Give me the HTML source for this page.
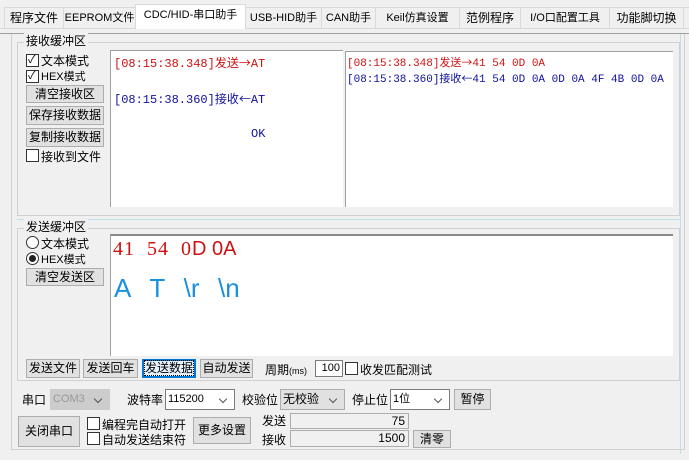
<!DOCTYPE html>
<html><head><meta charset="utf-8"><style>
*{box-sizing:border-box;margin:0;padding:0}
body{width:689px;height:460px;background:#f0f0f0;font-family:"Liberation Sans","Noto Sans CJK SC",sans-serif;font-size:12px;color:#000;position:relative;overflow:hidden}
.a{position:absolute;white-space:nowrap}
.tab{position:absolute;top:7px;height:21px;border:1px solid #d9d9d9;border-bottom:none;background:#f0f0f0;text-align:center;line-height:20px;font-size:12px}
.tab.act{background:#fff;top:4px;height:25px;border-color:#d9d9d9}
.btn{position:absolute;background:#e1e1e1;border:1px solid #adadad;text-align:center;font-size:12px}
.cb{position:absolute;width:13px;height:13px;border:1px solid #333;background:#fff}
.mono{font-family:"Liberation Mono","Noto Sans CJK SC",monospace;font-size:12px}
.ar{font-family:"Noto Sans CJK SC",sans-serif;font-size:12px}
.box{position:absolute;background:#fff}
.combo{position:absolute;background:#fff;border:1px solid #7a7a7a;height:21px;line-height:19px;padding-left:2px;font-size:12px}
.combo:after{content:"";position:absolute;right:8px;top:6px;width:5px;height:5px;border-right:1px solid #555;border-bottom:1px solid #555;transform:rotate(45deg)}
.field{position:absolute;background:#f0f0f0;border:1px solid #adadad;text-align:right;padding-right:3px;line-height:14px;font-size:12px}
</style></head><body>
<div class="a" style="left:0;top:28px;width:689px;height:432px;background:#f0f0f0;border-top:1px solid #d9d9d9"></div>
<div class="tab" style="left:4px;width:60px">程序文件</div>
<div class="tab" style="left:63px;width:73px;font-size:11px">EEPROM文件</div>
<div class="tab act" style="left:135px;width:111px;font-size:11px">CDC/HID-串口助手</div>
<div class="tab" style="left:245px;width:77px;font-size:11px">USB-HID助手</div>
<div class="tab" style="left:321px;width:55px;font-size:11px">CAN助手</div>
<div class="tab" style="left:375px;width:85px;font-size:11px">Keil仿真设置</div>
<div class="tab" style="left:459px;width:62px">范例程序</div>
<div class="tab" style="left:520px;width:90px;font-size:11px">I/O口配置工具</div>
<div class="tab" style="left:609px;width:75px">功能脚切换</div>
<div class="tab" style="left:683px;width:10px"></div>
<div class="a" style="left:0;top:33px;width:689px;height:1px;background:#a0a0a0"></div>
<div class="a" style="left:11px;top:34px;width:674px;height:416px;border:1px solid #d0d0d0;border-top:none"></div>
<div class="a" style="left:680px;top:34px;width:1px;height:420px;background:#c5dde8"></div>
<!-- receive group -->
<div class="a" style="left:17px;top:42px;width:663px;height:174px;border:1px solid #d0d0d0"></div>
<div class="a" style="left:17px;top:219px;width:663px;height:1px;background:#bfe0ec"></div>
<div class="a" style="left:24px;top:33px;background:#f0f0f0;padding:0 2px;line-height:16px">接收缓冲区</div>
<div class="cb" style="left:26px;top:54px"></div><div class="a" style="left:28px;top:51px;font-size:11px">✓</div><div class="a" style="left:41px;top:52px">文本模式</div>
<div class="cb" style="left:26px;top:70px"></div><div class="a" style="left:28px;top:67px;font-size:11px">✓</div><div class="a" style="left:41px;top:68px;font-size:11px">HEX模式</div>
<div class="btn" style="left:26px;top:85px;width:78px;height:18px;line-height:16px">清空接收区</div>
<div class="btn" style="left:26px;top:106px;width:78px;height:19px;line-height:17px">保存接收数据</div>
<div class="btn" style="left:26px;top:128px;width:78px;height:19px;line-height:17px">复制接收数据</div>
<div class="cb" style="left:26px;top:149px"></div><div class="a" style="left:41px;top:148px">接收到文件</div>
<div class="box" style="left:110px;top:50px;width:233px;height:157px;border-left:1px solid #a0a0a0;border-top:1px solid #a0a0a0"></div>
<div class="a mono" style="left:114px;top:54px;color:#d01010">[08:15:38.348]发送<span class="ar">→</span>AT</div>
<div class="a mono" style="left:114px;top:90px;color:#1010a0">[08:15:38.360]接收<span class="ar">←</span>AT</div>
<div class="a mono" style="left:251px;top:127px;color:#1010a0">OK</div>
<div class="box" style="left:345px;top:51px;width:328px;height:156px;border-left:1px solid #a0a0a0;border-top:1px solid #a0a0a0"></div>
<div class="a mono" style="left:347px;top:54px;color:#d01010;font-size:11px">[08:15:38.348]发送<span class="ar" style="font-size:11px">→</span>41 54 0D 0A</div>
<div class="a mono" style="left:347px;top:70px;color:#1010a0;font-size:11px">[08:15:38.360]接收<span class="ar" style="font-size:11px">←</span>41 54 0D 0A 0D 0A 4F 4B 0D 0A</div>
<!-- send group -->
<div class="a" style="left:17px;top:228px;width:663px;height:153px;border:1px solid #d0d0d0"></div>
<div class="a" style="left:24px;top:219px;background:#f0f0f0;padding:0 2px;line-height:16px">发送缓冲区</div>
<div class="cb" style="left:26px;top:236px;border-radius:50%"></div><div class="a" style="left:41px;top:235px">文本模式</div>
<div class="cb" style="left:26px;top:252px;border-radius:50%"></div><div class="a" style="left:29px;top:255px;width:7px;height:7px;border-radius:50%;background:#222"></div><div class="a" style="left:41px;top:251px;font-size:11px">HEX模式</div>
<div class="btn" style="left:26px;top:268px;width:78px;height:18px;line-height:16px">清空发送区</div>
<div class="box" style="left:110px;top:234px;width:563px;height:122px;border-top:2px solid #888;border-left:1px solid #a0a0a0"></div>
<div class="a" style="left:113px;top:238px;color:#d01010;font-size:20px;font-family:'Liberation Serif',serif;letter-spacing:1px">41&nbsp; 54&nbsp; 0<span style="font-family:'Liberation Sans',sans-serif;letter-spacing:0">D 0A</span></div>
<div class="a" style="left:114px;top:273px;color:#1a90e0;font-size:26px;word-spacing:2px">A&nbsp; T&nbsp; \r&nbsp; \n</div>
<div class="btn" style="left:26px;top:359px;width:54px;height:19px;line-height:17px">发送文件</div>
<div class="btn" style="left:83px;top:359px;width:55px;height:19px;line-height:17px">发送回车</div>
<div class="btn" style="left:142px;top:359px;width:54px;height:19px;line-height:15px;border:2px solid #0078d7;background:#e5f1fb"><span style="outline:1px dotted #000">发送数据</span></div>
<div class="btn" style="left:200px;top:359px;width:53px;height:19px;line-height:17px">自动发送</div>
<div class="a" style="left:265px;top:361px">周期<span style="font-size:9px">(ms)</span></div>
<div class="a" style="left:315px;top:360px;width:28px;height:17px;background:#fff;border:1px solid #7a7a7a;text-align:right;padding-right:2px;line-height:15px;font-size:11px">100</div>
<div class="cb" style="left:345px;top:362px"></div><div class="a" style="left:360px;top:361px">收发匹配测试</div>
<!-- bottom -->
<div class="a" style="left:22px;top:391px">串口</div>
<div class="combo" style="left:50px;top:389px;width:60px;background:#ccc;border-color:#ccc;color:#999;font-size:11px">COM3</div>
<div class="a" style="left:127px;top:391px">波特率</div>
<div class="combo" style="left:165px;top:389px;width:70px;font-size:11px">115200</div>
<div class="a" style="left:242px;top:391px">校验位</div>
<div class="combo" style="left:280px;top:389px;width:65px;background:#e1e1e1;border-color:#adadad">无校验</div>
<div class="a" style="left:352px;top:391px">停止位</div>
<div class="combo" style="left:390px;top:389px;width:60px;font-size:11px">1位</div>
<div class="btn" style="left:454px;top:389px;width:37px;height:21px;line-height:19px">暂停</div>
<div class="btn" style="left:18px;top:416px;width:62px;height:31px;line-height:29px">关闭串口</div>
<div class="cb" style="left:87px;top:417px"></div><div class="a" style="left:102px;top:416px">编程完自动打开</div>
<div class="cb" style="left:87px;top:432px"></div><div class="a" style="left:102px;top:431px">自动发送结束符</div>
<div class="btn" style="left:193px;top:417px;width:58px;height:27px;line-height:25px">更多设置</div>
<div class="a" style="left:262px;top:412px">发送</div>
<div class="a" style="left:262px;top:431px">接收</div>
<div class="field" style="left:290px;top:413px;width:119px;height:16px">75</div>
<div class="field" style="left:290px;top:430px;width:119px;height:17px">1500</div>
<div class="btn" style="left:413px;top:430px;width:38px;height:18px;line-height:16px">清零</div>
</body></html>
